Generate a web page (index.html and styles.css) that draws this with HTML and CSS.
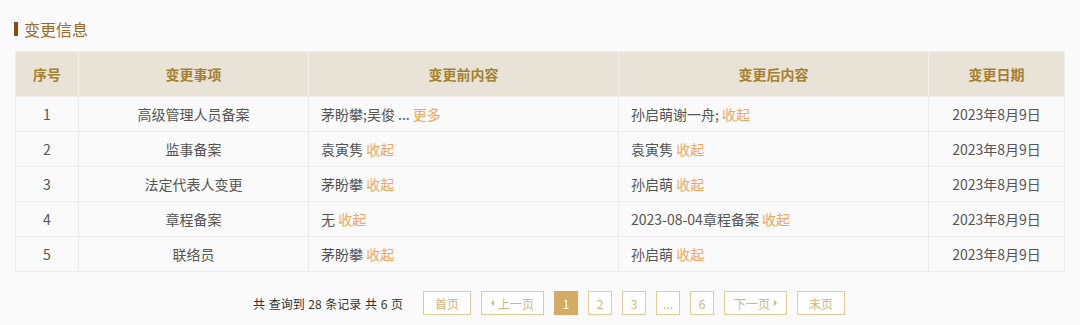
FILE: index.html
```html
<!DOCTYPE html>
<html lang="zh-CN">

<head>
    <meta charset="UTF-8">
    <title>变更信息</title>
    <link rel="stylesheet" href="styles.css">
</head>

<body>
    <div class="section">
        <h2 class="section-title">变更信息</h2>

        <!-- 变更记录表 -->
        <table class="change-table">
            <thead>
                <tr>
                    <th class="col-no">序号</th>
                    <th class="col-item">变更事项</th>
                    <th class="col-before">变更前内容</th>
                    <th class="col-after">变更后内容</th>
                    <th class="col-date">变更日期</th>
                </tr>
            </thead>
            <tbody>
                <tr>
                    <td>1</td>
                    <td>高级管理人员备案</td>
                    <td class="left">茅盼攀;吴俊 ... <a class="toggle">更多</a></td>
                    <td class="left">孙启萌谢一舟; <a class="toggle">收起</a></td>
                    <td>2023年8月9日</td>
                </tr>
                <tr>
                    <td>2</td>
                    <td>监事备案</td>
                    <td class="left">袁寅隽 <a class="toggle">收起</a></td>
                    <td class="left">袁寅隽 <a class="toggle">收起</a></td>
                    <td>2023年8月9日</td>
                </tr>
                <tr>
                    <td>3</td>
                    <td>法定代表人变更</td>
                    <td class="left">茅盼攀 <a class="toggle">收起</a></td>
                    <td class="left">孙启萌 <a class="toggle">收起</a></td>
                    <td>2023年8月9日</td>
                </tr>
                <tr>
                    <td>4</td>
                    <td>章程备案</td>
                    <td class="left">无 <a class="toggle">收起</a></td>
                    <td class="left">2023-08-04章程备案 <a class="toggle">收起</a></td>
                    <td>2023年8月9日</td>
                </tr>
                <tr>
                    <td>5</td>
                    <td>联络员</td>
                    <td class="left">茅盼攀 <a class="toggle">收起</a></td>
                    <td class="left">孙启萌 <a class="toggle">收起</a></td>
                    <td>2023年8月9日</td>
                </tr>
            </tbody>
        </table>

        <!-- 分页 -->
        <div class="pager">
            <span class="pager-info">共 查询到 28 条记录 共 6 页</span>
            <a class="page-btn wide">首页</a>
            <a class="page-btn wider"><span class="arrow-left"></span>上一页</a>
            <a class="page-btn active">1</a>
            <a class="page-btn">2</a>
            <a class="page-btn">3</a>
            <a class="page-btn">...</a>
            <a class="page-btn">6</a>
            <a class="page-btn wider">下一页<span class="arrow-right"></span></a>
            <a class="page-btn wide">末页</a>
        </div>
    </div>
</body>

</html>
```

FILE: styles.css
```css
* {
    margin: 0;
    padding: 0;
    box-sizing: border-box;
}

body {
    font-family: "Noto Sans CJK SC", "Noto Sans", sans-serif;
    background-color: #fafafa;
    color: #555;
    font-size: 14px;
}

.section {
    padding: 18px 15px 0 15px;
}

.section-title {
    display: flex;
    align-items: center;
    height: 22px;
    font-size: 16px;
    font-weight: normal;
    color: #9a6a2e;
    line-height: 22px;
    margin-bottom: 11px;
}

.section-title::before {
    content: "";
    display: inline-block;
    width: 4px;
    height: 14px;
    margin-left: -1px;
    margin-right: 6px;
    background-color: #8a4a0e;
}

.change-table {
    width: 100%;
    border-collapse: collapse;
    table-layout: fixed;
}

.change-table th,
.change-table td {
    border: 1px solid #ececec;
    text-align: center;
    font-weight: normal;
}

.change-table th {
    height: 45px;
    background-color: #e9e2d7;
    color: #a5802f;
    font-weight: bold;
    font-size: 14px;
    border-color: #f3efe8;
}

.change-table td {
    height: 35px;
    background-color: #fafafa;
    color: #555;
}

.change-table td.left {
    text-align: left;
    padding-left: 12px;
}

.col-no {
    width: 63px;
}

.col-item {
    width: 230px;
}

.col-before,
.col-after {
    width: 310px;
}

.toggle {
    color: #f5a65b;
    cursor: pointer;
}

.pager {
    display: flex;
    justify-content: center;
    align-items: center;
    gap: 10px;
    margin-top: 19px;
    padding-left: 18px;
}

.pager-info {
    font-size: 12px;
    color: #333;
    word-spacing: 1px;
    margin-right: 10px;
}

.page-btn {
    display: flex;
    align-items: center;
    justify-content: center;
    width: 24px;
    height: 24px;
    border: 1px solid #e4cc98;
    color: #d4b47a;
    font-size: 12px;
    background-color: #fff;
    cursor: pointer;
}

.page-btn.wide {
    width: 48px;
}

.page-btn.wider {
    width: 63px;
}

.page-btn.active {
    background-color: #d4ab62;
    border-color: #d4ab62;
    color: #fff;
}

.arrow-left,
.arrow-right {
    display: inline-block;
    width: 0;
    height: 0;
    border-top: 3px solid transparent;
    border-bottom: 3px solid transparent;
}

.arrow-left {
    border-right: 3px solid #d4b47a;
    margin-right: 4px;
}

.arrow-right {
    border-left: 3px solid #d4b47a;
    margin-left: 4px;
}
```
